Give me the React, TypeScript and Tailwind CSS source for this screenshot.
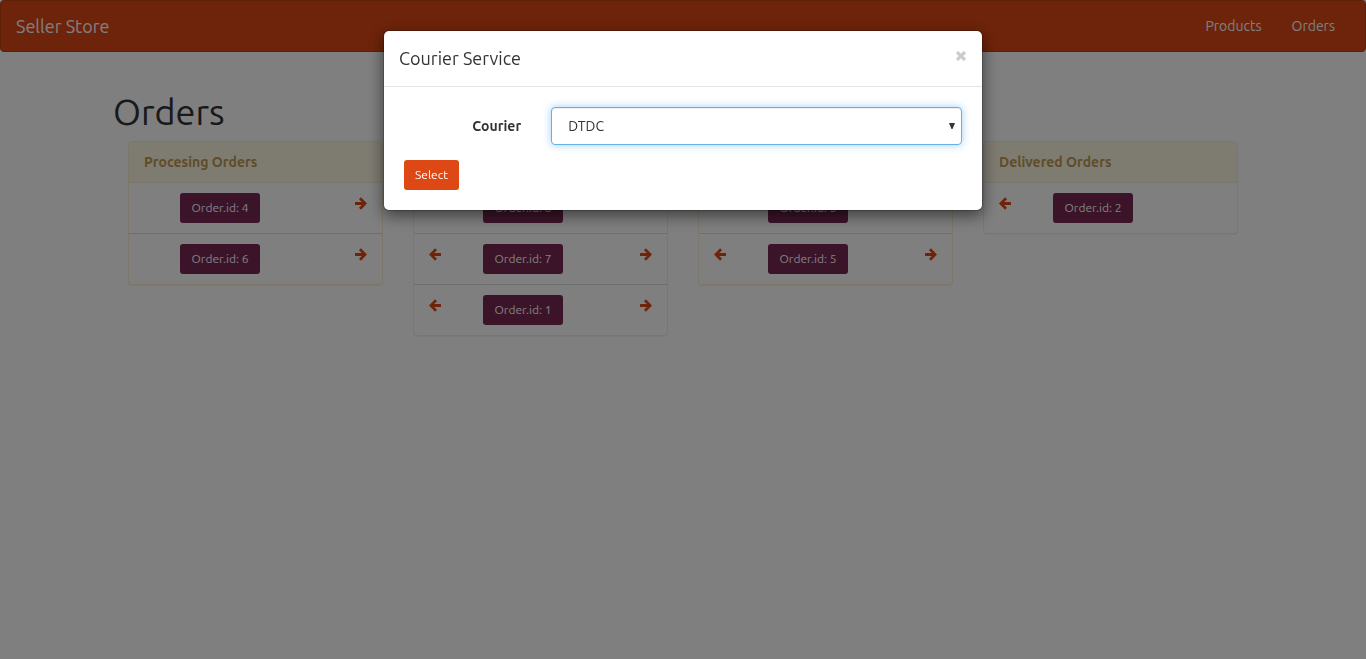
import { useState } from "react";

type Column = { title: string; ids: number[]; back: boolean; forward: boolean };

const columns: Column[] = [
  { title: "Procesing Orders", ids: [4, 6], back: false, forward: true },
  { title: "Packed Orders", ids: [8, 7, 1], back: true, forward: true },
  { title: "Shipped Orders", ids: [3, 5], back: true, forward: true },
  { title: "Delivered Orders", ids: [2], back: true, forward: false },
];

function Arrow({ left = false }: { left?: boolean }) {
  return (
    <svg viewBox="0 0 12 13" className="block h-[13px] w-3" fill="currentColor" aria-hidden="true">
      <path
        transform={left ? "matrix(-1 0 0 1 12 0)" : undefined}
        d="M4 2.2 5.9.3 12 6.5 5.9 12.7 4 10.8 6.8 8H.5Q0 8 0 7.5V5.5Q0 5 .5 5H6.8Z"
      />
    </svg>
  );
}

function OrderRow({ id, back, forward }: { id: number; back: boolean; forward: boolean }) {
  return (
    <li className="flex items-start border-t border-[#dddddd] px-[15px] py-[10px] first:border-t-0">
      {back && (
        <button type="button" aria-label={`Move order ${id} back`} className="w-[18px] pt-1 text-[#dd4814]">
          <Arrow left />
        </button>
      )}
      <button
        type="button"
        className="ml-9 h-[30px] w-20 rounded-[3px] bg-[#772953] text-[12px] leading-[18px] text-white"
      >
        Order.id: {id}
      </button>
      {forward && (
        <button type="button" aria-label={`Move order ${id} forward`} className="ml-auto pt-1 text-[#dd4814]">
          <Arrow />
        </button>
      )}
    </li>
  );
}

function OrderPanel({ title, ids, back, forward }: Column) {
  return (
    <section className="rounded-[4px] border border-[#fbeed5] bg-white shadow-[0_1px_1px_rgba(0,0,0,0.05)]">
      <h2 className="rounded-t-[3px] border-b border-[#fbeed5] bg-[#fcf8e3] px-[15px] py-[10px] text-[14px] leading-5 font-bold text-[#c09853]">
        {title}
      </h2>
      <ul>
        {ids.map((id) => (
          <OrderRow key={id} id={id} back={back} forward={forward} />
        ))}
      </ul>
    </section>
  );
}

function CourierDialog() {
  const [courier, setCourier] = useState("DTDC");
  return (
    <div className="fixed inset-0 overflow-y-auto bg-black/50">
      <div
        role="dialog"
        aria-modal="true"
        aria-labelledby="courier-title"
        className="mx-auto mt-[30px] max-w-[600px] rounded-[6px] border border-black/20 bg-white bg-clip-padding shadow-[0_5px_15px_rgba(0,0,0,0.5)]"
      >
        <header className="flex items-start justify-between border-b border-[#e5e5e5] p-[15px]">
          <h2 id="courier-title" className="text-[18px] leading-[25px]">
            Courier Service
          </h2>
          <button type="button" aria-label="Close" className="pt-[5px] text-[#cccccc]">
            <svg viewBox="0 0 12 10" className="block h-[10px] w-3" stroke="currentColor" strokeWidth="3.2" aria-hidden="true">
              <path d="M2 1 10 9M10 1 2 9" />
            </svg>
          </button>
        </header>
        <form className="p-5" onSubmit={(e) => e.preventDefault()}>
          <div className="flex items-center gap-[30px]">
            <label htmlFor="courier" className="w-[21%] text-right text-[14px] leading-5 font-bold">
              Courier
            </label>
            <div className="relative flex-1">
              <select
                id="courier"
                value={courier}
                onChange={(e) => setCourier(e.target.value)}
                className="block h-[38px] w-full appearance-none rounded-[4px] border border-[#66afe9] bg-white px-4 text-[14px] leading-5 shadow-[inset_0_1px_1px_rgba(0,0,0,0.075),0_0_8px_rgba(102,175,233,0.6)] outline-none"
              >
                <option>DTDC</option>
              </select>
              <svg viewBox="0 0 6 6" className="pointer-events-none absolute top-4 right-[7px] h-[6px] w-[6px]" fill="#333333" aria-hidden="true">
                <path d="M0 0H6L3.5 6H2.5Z" />
              </svg>
            </div>
          </div>
          <button
            type="submit"
            className="mt-[15px] block h-[30px] min-w-[55px] rounded-[3px] bg-[#dd4814] px-[10px] text-[12px] leading-[18px] text-white"
          >
            Select
          </button>
        </form>
      </div>
    </div>
  );
}

export default function App() {
  return (
    <div className="min-h-screen bg-white font-[Ubuntu,Roboto,sans-serif] text-[14px] leading-5 text-[#333333]">
      <nav className="flex items-center justify-between rounded-[4px] border border-[#bf3e11] bg-[#dd4814] px-[15px] py-[15px] text-white">
        <a href="#home" className="text-[18px] leading-5">
          Seller Store
        </a>
        <div className="flex gap-[30px] pr-[15px]">
          <a href="#products">Products</a>
          <a href="#orders">Orders</a>
        </div>
      </nav>
      <main className="mx-auto max-w-[1170px] px-[15px] pt-10">
        <h1 className="pb-[10px] text-[36px] leading-[39px] font-normal">Orders</h1>
        <div className="grid grid-cols-4 items-start gap-[30px] px-[15px]">
          {columns.map((column) => (
            <OrderPanel key={column.title} {...column} />
          ))}
        </div>
      </main>
      <CourierDialog />
    </div>
  );
}
